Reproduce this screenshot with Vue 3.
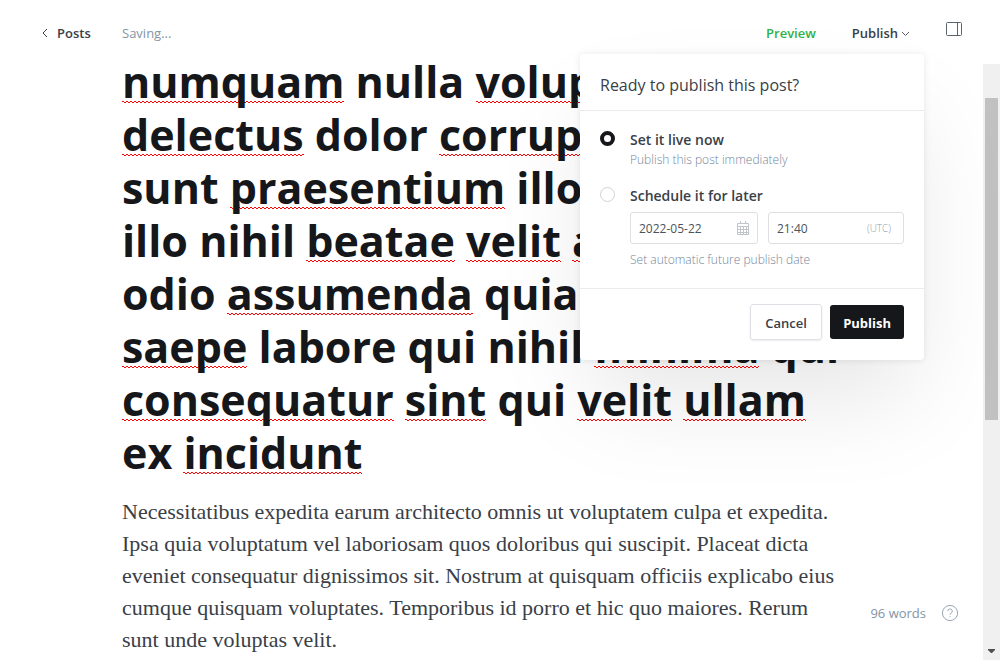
<script setup>
import { ref } from 'vue'

const mode = ref('now')
const date = ref('2022-05-22')
const time = ref('21:40')

const titleLines = [
  [['numquam', 1], ['nulla', 0], ['volup', 1]],
  [['delectus', 1], ['dolor', 0], ['corrup', 1]],
  [['sunt', 0], ['praesentium', 1], ['illo', 0]],
  [['illo', 0], ['nihil', 0], ['beatae', 1], ['velit', 1], ['a', 1]],
  [['odio', 0], ['assumenda', 1], ['quia', 0]],
  [['saepe', 1], ['labore', 0], ['qui', 0], ['nihil', 0], ['minima', 1], ['qui', 0]],
  [['consequatur', 1], ['sint', 1], ['qui', 0], ['velit', 1], ['ullam', 1]],
  [['ex', 0], ['incidunt', 1]],
]

const bodyLines = [
  'Necessitatibus expedita earum architecto omnis ut voluptatem culpa et expedita.',
  'Ipsa quia voluptatum vel laboriosam quos doloribus qui suscipit. Placeat dicta',
  'eveniet consequatur dignissimos sit. Nostrum at quisquam officiis explicabo eius',
  'cumque quisquam voluptates. Temporibus id porro et hic quo maiores. Rerum',
  'sunt unde voluptas velit.',
]
</script>

<template>
  <div class="editor">
    <header class="topbar">
      <a class="back" href="#posts">
        <svg width="6" height="10" viewBox="0 0 6 10" aria-hidden="true"><path d="M5 1 1 5l4 4" /></svg>
        <span>Posts</span>
      </a>
      <span class="status">Saving...</span>
      <nav class="actions">
        <button type="button" class="preview">Preview</button>
        <div class="publish-wrap">
          <button type="button" class="publish-toggle">
            <span>Publish</span>
            <svg width="9" height="8" viewBox="0 0 9 8" aria-hidden="true"><path d="M1 3 4.500 6.500 8 3" /></svg>
          </button>
          <form class="menu" @submit.prevent>
            <h2 class="menu-head">Ready to publish this post?</h2>
            <div class="menu-body">
              <input id="now" v-model="mode" class="radio" type="radio" name="mode" value="now" />
              <div class="option">
                <label for="now">Set it live now</label>
                <p>Publish this post immediately</p>
              </div>
              <input id="later" v-model="mode" class="radio" type="radio" name="mode" value="later" />
              <div class="option">
                <label for="later">Schedule it for later</label>
                <div class="fields">
                  <div class="field">
                    <input v-model="date" type="text" aria-label="Publish date" />
                    <svg width="12" height="14" viewBox="0 0 12 14" aria-hidden="true">
                      <path d="M.5 2.500h11v11H.5zM.5 5.500h11M.5 8.500h11M.5 11.500h11M3.500 5v8M6.500 5v8M9.500 5v8M3.500 0v3M8.500 0v3" />
                    </svg>
                  </div>
                  <div class="field">
                    <input v-model="time" type="text" aria-label="Publish time" />
                    <span class="zone">(UTC)</span>
                  </div>
                </div>
                <p>Set automatic future publish date</p>
              </div>
            </div>
            <div class="menu-foot">
              <button type="button" class="cancel">Cancel</button>
              <button type="submit" class="confirm">Publish</button>
            </div>
          </form>
        </div>
        <button type="button" class="sidebar-toggle" aria-label="Settings">
          <svg width="16" height="14" viewBox="0 0 16 14" aria-hidden="true">
            <rect x=".5" y=".5" width="15" height="13" rx="1" /><path d="M11.500 .5v13" />
          </svg>
        </button>
      </nav>
    </header>

    <main class="canvas">
      <article class="post">
        <h1>
          <span v-for="(line, i) in titleLines" :key="i" class="line">
            <template v-for="([word, flagged], j) in line" :key="j"><span :class="{ flagged }">{{ word }}</span>{{ ' ' }}</template>
          </span>
        </h1>
        <p class="text"><span v-for="line in bodyLines" :key="line" class="line">{{ line }}</span></p>
      </article>
      <div class="scrollbar" aria-hidden="true">
        <div class="thumb"></div>
        <svg width="7" height="4" viewBox="0 0 7 4"><path d="M0 0h7v1L4 4H3L0 1z" /></svg>
      </div>
      <footer class="stats">
        <span>96 words</span>
        <a href="#help" aria-label="Help">
          <svg width="18" height="18" viewBox="0 0 18 18" aria-hidden="true">
            <circle cx="9" cy="9" r="7.600" />
            <path d="M6.700 7.200a2.300 2.300 0 1 1 3.300 2.100c-.7.300-1 .7-1 1.400M9 12.200v1" />
          </svg>
        </a>
      </footer>
    </main>
  </div>
</template>

<style>
body {
  margin: 0;
  background: #fff;
}
</style>

<style scoped>
.editor {
  display: flex;
  flex-direction: column;
  height: 100vh;
  overflow: hidden;
  color: #394047;
  font: 13px/20px "Open Sans", "Noto Sans", sans-serif;
}

* {
  box-sizing: border-box;
}

button {
  padding: 0;
  border: 0;
  background: none;
  color: inherit;
  font: inherit;
}

svg {
  display: block;
  flex: none;
  fill: none;
  stroke: currentColor;
}

h1,
h2,
p {
  margin: 0;
}

.topbar {
  display: flex;
  align-items: center;
  height: 64px;
  flex: none;
  padding: 2px 38px 0 42px;
}

.back {
  display: flex;
  align-items: center;
  gap: 9px;
  width: 80px;
  color: #394047;
  font-weight: 600;
  text-decoration: none;
}

.status {
  color: #8394a5;
}

.actions {
  display: flex;
  align-items: center;
  margin-left: auto;
}

.preview {
  color: #30b24a;
  font-weight: 600;
}

.publish-wrap {
  position: relative;
  margin: 0 36px;
}

.publish-toggle {
  display: flex;
  align-items: center;
  gap: 3px;
  font-weight: 600;
}

.publish-toggle svg {
  color: #5c646b;
}

.sidebar-toggle {
  margin-bottom: 8px;
  color: #5c646b;
}

.menu {
  position: absolute;
  z-index: 2;
  top: 31px;
  right: -14px;
  width: 344px;
  border-radius: 4px;
  background: #fff;
  box-shadow: 0 0 7px rgba(0, 0, 0, 0.08), 0 2px 4px rgba(0, 0, 0, 0.02), 0 50px 100px -12px rgba(0, 0, 0, 0.1);
}

.menu-head {
  padding: 19px 20px 13px;
  border-bottom: 1px solid #e9ebed;
  font-size: 16px;
  font-weight: 400;
  line-height: 24px;
}

.menu-body {
  display: grid;
  grid-template-columns: 15px 1fr;
  gap: 16px 15px;
  padding: 19px 20px 18px;
  border-bottom: 1px solid #e9ebed;
}

.radio {
  width: 15px;
  height: 15px;
  margin: 1px 0 0;
  appearance: none;
  border: 1px solid #ced4d9;
  border-radius: 50%;
}

.radio:checked {
  border: 4px solid #15171a;
}

.option {
  min-width: 0;
}

.option label {
  display: block;
  font-size: 14px;
  font-weight: 600;
}

.option p {
  color: #74869a;
  font-size: 12px;
  font-weight: 300;
}

.fields {
  display: grid;
  grid-template-columns: minmax(0, 128fr) minmax(0, 136fr);
  gap: 10px;
  margin: 6px 0;
}

.field {
  display: flex;
  align-items: center;
  height: 32px;
  padding: 0 8px;
  border: 1px solid #dddfe2;
  border-radius: 3px;
  color: #c0c5ca;
}

.field input {
  flex: 1;
  min-width: 0;
  padding: 2px 0 0;
  border: 0;
  outline: 0;
  background: none;
  color: #4b535a;
  font: inherit;
  font-size: 12px;
}

.zone {
  padding-right: 4px;
  color: #8f9ba8;
  font-size: 10px;
  font-weight: 300;
}

.menu-foot {
  display: flex;
  justify-content: flex-end;
  align-items: center;
  gap: 8px;
  padding: 15px 20px 20px;
}

.cancel,
.confirm {
  min-width: 72px;
  height: 36px;
  padding: 2px 13px 0;
  border: 1px solid #dde1e5;
  border-radius: 3px;
  font-weight: 600;
  box-shadow: 0 1px 2px rgba(0, 0, 0, 0.08);
}

.confirm {
  height: 34px;
  border: 0;
  background: #15171a;
  color: #fff;
  font-weight: 700;
  box-shadow: none;
}

.canvas {
  position: relative;
  display: flex;
  flex: 1;
  min-height: 0;
}

.post {
  display: flex;
  flex: 1;
  flex-direction: column;
  justify-content: flex-end;
  overflow: hidden;
  padding: 0 100px 4px 122px;
  white-space: nowrap;
}

.line {
  display: block;
}

h1 {
  color: #15171a;
  font-size: 43px;
  font-weight: 700;
  line-height: 53px;
}

.flagged {
  background:
    linear-gradient(90deg, #f00 50%, transparent 50%) 0 calc(100% - 9px) / 4px 1px repeat-x,
    linear-gradient(90deg, transparent 50%, #f00 50%) 0 calc(100% - 8px) / 4px 1px repeat-x;
}

.text {
  margin-top: 17px;
  font-family: "Liberation Serif", serif;
  font-size: 22px;
  line-height: 32px;
}

.scrollbar {
  display: flex;
  flex-direction: column;
  align-items: center;
  justify-content: space-between;
  width: 17px;
  padding: 34px 0 7px;
  background: #f0f0f0;
}

.thumb {
  width: 13px;
  height: 58%;
  background: #c1c1c1;
}

.scrollbar path {
  fill: #505050;
  stroke: none;
}

.stats {
  position: absolute;
  right: 41px;
  bottom: 37px;
  display: flex;
  align-items: center;
  gap: 15px;
  color: #8394a5;
}

.stats a {
  color: #9aa7b5;
}
</style>
